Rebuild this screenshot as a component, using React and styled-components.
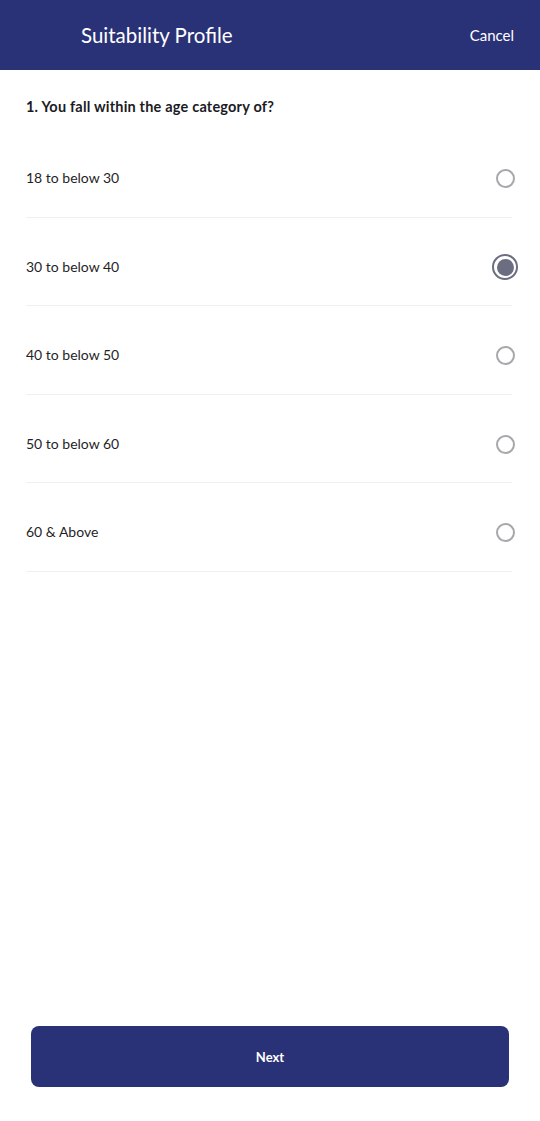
import React, { useState } from "react";
import styled, { createGlobalStyle } from "styled-components";

const Global = createGlobalStyle`
  html, body { margin: 0; padding: 0; background: #ffffff; }
  body { font-family: Lato, "Noto Sans", sans-serif; -webkit-font-smoothing: antialiased; }
  * { box-sizing: border-box; }
`;

const Page = styled.div`
  width: 540px;
  height: 1121px;
  display: flex;
  flex-direction: column;
  background: #ffffff;
`;

const Header = styled.header`
  height: 70px;
  flex: 0 0 70px;
  background: #2a3277;
  display: flex;
  align-items: center;
  justify-content: space-between;
  padding: 0 26px 0 81px;
  color: #ffffff;
`;

const Title = styled.h1`
  margin: 0;
  font-size: 20.5px;
  font-weight: 400;
`;

const CancelButton = styled.button`
  background: none;
  border: none;
  color: #ffffff;
  font-family: inherit;
  font-size: 15px;
  padding: 0;
  cursor: pointer;
`;

const Body = styled.main`
  flex: 1;
  display: flex;
  flex-direction: column;
  padding: 27px 28px 0 26px;
`;

const Question = styled.h2`
  margin: 0 0 13px;
  font-size: 14.5px;
  font-weight: 700;
  letter-spacing: 0.2px;
  color: #1b1b24;
  line-height: 19px;
`;

const Options = styled.div`
  display: flex;
  flex-direction: column;
`;

const Option = styled.label`
  height: 88.5px;
  display: flex;
  align-items: center;
  justify-content: space-between;
  padding: 10px 0 0;
  border-bottom: 1px solid #f0f0f2;
  cursor: pointer;
`;

const OptionText = styled.span`
  font-size: 14px;
  color: #1f1f28;
`;

const RadioSlot = styled.span`
  width: 26px;
  height: 26px;
  display: flex;
  align-items: center;
  justify-content: center;
  margin: 2px -6px 0 0;
`;

const Radio = styled.span`
  width: ${(p) => (p.$checked ? 26 : 19)}px;
  height: ${(p) => (p.$checked ? 26 : 19)}px;
  border-radius: 50%;
  border: ${(p) => (p.$checked ? "2.5px solid #6b6d80" : "2px solid #a8a8ac")};
  display: flex;
  align-items: center;
  justify-content: center;
  background: #fff;
  &::after {
    content: "";
    display: ${(p) => (p.$checked ? "block" : "none")};
    width: 17px;
    height: 17px;
    border-radius: 50%;
    background: #6b6d80;
  }
`;

const Footer = styled.div`
  padding: 0 31px 34px;
`;

const NextButton = styled.button`
  width: 100%;
  height: 61px;
  border: none;
  border-radius: 8px;
  background: #2a3277;
  color: #ffffff;
  font-family: inherit;
  font-size: 13px;
  font-weight: 700;
  cursor: pointer;
`;

const options = ["18 to below 30", "30 to below 40", "40 to below 50", "50 to below 60", "60 & Above"];

export default function App() {
  const [selected, setSelected] = useState(1);
  return (
    <Page>
      <Global />
      <Header>
        <Title>Suitability Profile</Title>
        <CancelButton>Cancel</CancelButton>
      </Header>
      <Body>
        <Question>1. You fall within the age category of?</Question>
        <Options>
          {options.map((o, i) => (
            <Option key={o} onClick={() => setSelected(i)}>
              <OptionText>{o}</OptionText>
              <RadioSlot>
                <Radio $checked={selected === i} />
              </RadioSlot>
            </Option>
          ))}
        </Options>
      </Body>
      <Footer>
        <NextButton>Next</NextButton>
      </Footer>
    </Page>
  );
}
